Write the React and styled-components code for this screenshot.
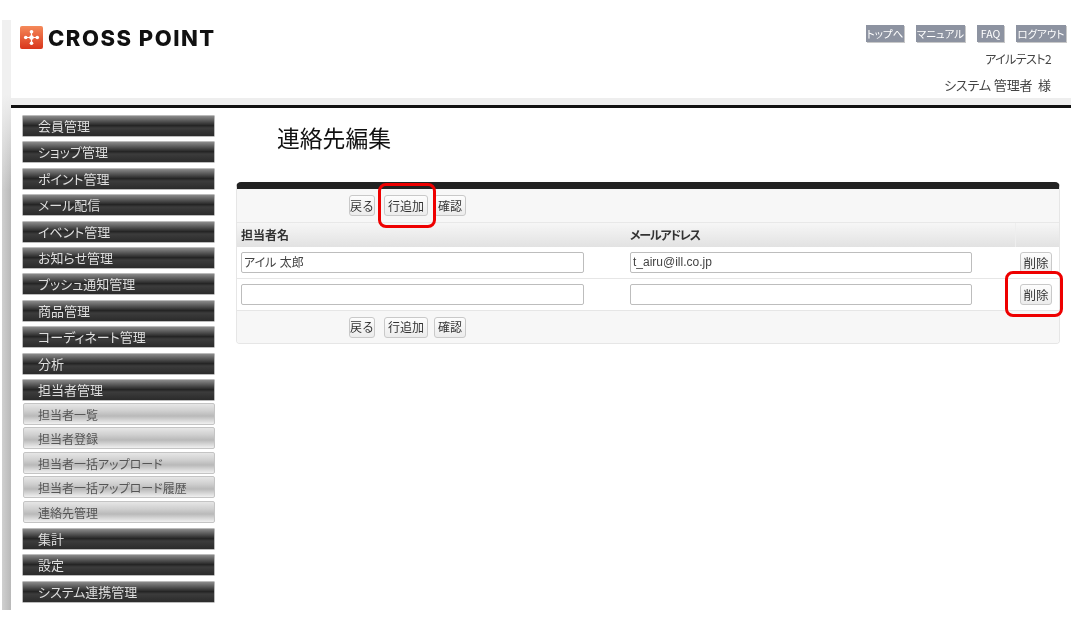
import React from "react";
import styled, { createGlobalStyle } from "styled-components";

const jp = `"Noto Sans CJK JP", "Liberation Sans", sans-serif`;

const Global = createGlobalStyle`
  html, body { margin: 0; padding: 0; background: #fff; }
  body {
    font-family: ${jp};
    font-feature-settings: "palt";
    width: 1071px;
    height: 617px;
    overflow: hidden;
  }
`;

const Page = styled.div`
  position: relative;
  width: 1071px;
  height: 617px;
  padding: 20px 0 7px 2px;
  box-sizing: border-box;
  display: flex;
  filter: blur(0.35px);
`;
const Strip = styled.div`
  width: 9px;
  flex: none;
  background:
    linear-gradient(180deg, #f0f0f0 0, #f0f0f0 75px, rgba(240, 240, 240, 0) 170px),
    linear-gradient(90deg, #d0d0d0, #b9b9b9);
`;
const Main = styled.div`
  flex: 1;
  min-width: 0;
  display: flex;
  flex-direction: column;
`;
const Header = styled.header`
  height: 78px;
  display: flex;
  justify-content: space-between;
  padding-left: 9px;
`;
const Logo = styled.div`
  display: flex;
  align-items: flex-start;
  gap: 5px;
  padding-top: 6px;
  color: #111;
  font-family: Inter, "Liberation Sans", sans-serif;
  font-feature-settings: normal;
  font-weight: 800;
  font-size: 22px;
  line-height: 24px;
  letter-spacing: 1.5px;
  white-space: nowrap;
`;
const HeaderRight = styled.div`
  display: flex;
  flex-direction: column;
  align-items: flex-end;
  padding: 5px 5px 0 0;
`;
const TopNav = styled.nav`
  display: flex;
  gap: 12px;
`;
const TopLink = styled.span`
  height: 17px;
  width: ${(p) => p.$w}px;
  display: flex;
  align-items: center;
  justify-content: center;
  background: #8d93a1;
  color: #fff;
  font-size: 10.5px;
  white-space: nowrap;
  box-shadow: 1px 1px 0 #c8c8c8;
`;
const UserLine = styled.div`
  margin: 8px 15px 0 0;
  font-size: ${(p) => p.$size}px;
  letter-spacing: ${(p) => p.$ls || 0}px;
  line-height: 18px;
  color: #444;
  white-space: pre;
`;
const Rule = styled.div`
  height: 7px;
  background: #eeeeee;
  border-bottom: 3px solid #111;
`;
const Body = styled.div`
  flex: 1;
  display: flex;
  min-height: 0;
`;
const Side = styled.aside`
  width: 193px;
  flex: none;
  margin-left: 11px;
  padding-top: 7px;
  display: flex;
  flex-direction: column;
`;
const MenuItem = styled.div`
  height: 22px;
  flex: none;
  margin-top: ${(p) => p.$mt || 0}px;
  margin-bottom: 4.4px;
  box-sizing: border-box;
  padding-left: 15px;
  border: 1px solid #bbb;
  border-radius: 1px;
  background: linear-gradient(180deg, #8a8a8a 0, #4f4f4f 28%, #242424 48%, #3c3c3c 60%, #2b2b2b 100%);
  color: #dedede;
  font-size: 13px;
  line-height: 20px;
  white-space: nowrap;
`;
const SubItem = styled.div`
  height: 22px;
  flex: none;
  margin: ${(p) => (p.$first ? "-2.4px" : "0")} 0 2.5px 1px;
  box-sizing: border-box;
  padding-left: 14px;
  border: 1px solid #c4c4c4;
  border-radius: 2px;
  background: linear-gradient(180deg, #e6e6e6 0, #cfcfcf 35%, #b9b9b9 60%, #f0f0f0 100%);
  color: #555;
  font-size: 12px;
  line-height: 21px;
  white-space: nowrap;
`;
const Content = styled.main`
  flex: 1;
  min-width: 0;
  padding-left: 21px;
`;
const Title = styled.h1`
  margin: 13px 0 0 41px;
  font-size: 22.8px;
  font-weight: 400;
  font-feature-settings: normal;
  line-height: 34px;
  color: #111;
`;
const Panel = styled.section`
  margin-top: 27px;
  width: 824px;
  height: 162px;
  border: 1px solid #e6e6e6;
  border-top: 7px solid #222;
  border-radius: 5px 5px 4px 4px;
  box-sizing: border-box;
  overflow: hidden;
`;
const Actions = styled.div`
  height: ${(p) => p.$h}px;
  display: flex;
  align-items: center;
  gap: 9px;
  padding-left: 112px;
  background: #f7f7f7;
`;
const Btn = styled.button`
  font-family: ${jp};
  font-feature-settings: normal;
  font-size: ${(p) => p.$size || 12}px;
  color: #333;
  height: 21px;
  width: ${(p) => p.$w}px;
  padding: 0;
  margin-left: ${(p) => p.$ml || 0}px;
  line-height: 18px;
  background: linear-gradient(180deg, #fdfdfd, #ececec);
  border: 1px solid #c9c9c9;
  border-radius: 3px;
  white-space: nowrap;
`;
const Row = styled.div`
  display: grid;
  grid-template-columns: 389px 389px 1fr;
`;
const HeadRow = styled(Row)`
  height: 25px;
  background: linear-gradient(180deg, #f6f6f6, #e2e2e2);
  border-top: 1px solid #e8e8e8;
  box-sizing: border-box;
`;
const HeadCell = styled.div`
  padding-left: 4px;
  font-size: 12px;
  font-weight: 700;
  line-height: 23px;
  letter-spacing: ${(p) => p.$ls || 0}px;
  color: #333;
  border-left: ${(p) => (p.$divider ? "1px solid #eee" : "none")};
`;
const DataRow = styled(Row)`
  height: 32px;
  background: #fff;
  border-bottom: 1px solid #e6e6e6;
  box-sizing: border-box;
  align-items: center;
`;
const Cell = styled.div`
  padding-left: 4px;
  display: flex;
  align-items: center;
`;
const Field = styled.input`
  width: ${(p) => p.$w}px;
  height: 21px;
  box-sizing: border-box;
  border: 1px solid #bdbdbd;
  border-radius: 2px;
  padding: 0 2px 2px;
  font-family: "Liberation Sans", "Noto Sans CJK JP", sans-serif;
  font-feature-settings: "palt";
  font-size: 12px;
  color: #444;
  outline: none;
  background: #fff;
`;
const DelCell = styled.div`
  padding-left: 5px;
  display: flex;
  align-items: center;
`;
const Mark = styled.div`
  position: absolute;
  left: ${(p) => p.$x}px;
  top: ${(p) => p.$y}px;
  width: ${(p) => p.$w}px;
  height: ${(p) => p.$h}px;
  box-sizing: border-box;
  border: 3px solid #ee0000;
  border-radius: 8px;
`;

const LogoIcon = () => (
  <svg width="23" height="23" viewBox="0 0 24 24" style={{ flex: "none" }}>
    <defs>
      <linearGradient id="lg" x1="0" y1="0" x2="0" y2="1">
        <stop offset="0" stopColor="#f58a5a" />
        <stop offset="1" stopColor="#d9361c" />
      </linearGradient>
    </defs>
    <rect width="24" height="24" rx="2" fill="url(#lg)" />
    <path d="M12 5V19M5 12H19" stroke="#fff" strokeWidth="1.3" />
    <circle cx="12" cy="12" r="2.4" fill="#fff" />
    <circle cx="12" cy="6" r="1.9" fill="#fff" />
    <circle cx="12" cy="18" r="1.9" fill="#fff" />
    <circle cx="6" cy="12" r="1.9" fill="#fff" />
    <circle cx="18" cy="12" r="1.9" fill="#fff" />
  </svg>
);

const before = ["会員管理", "ショップ管理", "ポイント管理", "メール配信", "イベント管理", "お知らせ管理", "プッシュ通知管理", "商品管理", "コーディネート管理", "分析", "担当者管理"];
const subs = ["担当者一覧", "担当者登録", "担当者一括アップロード", "担当者一括アップロード履歴", "連絡先管理"];
const after = ["集計", "設定", "システム連携管理"];

const ActionButtons = () => (
  <>
    <Btn $w={26}>戻る</Btn>
    <Btn $w={44}>行追加</Btn>
    <Btn $w={32} $ml={-3}>確認</Btn>
  </>
);

export default function App() {
  return (
    <Page>
      <Global />
      <Strip />
      <Main>
        <Header>
          <Logo>
            <LogoIcon />
            <span>CROSS POINT</span>
          </Logo>
          <HeaderRight>
            <TopNav>
              <TopLink $w={38}>トップへ</TopLink>
              <TopLink $w={49}>マニュアル</TopLink>
              <TopLink $w={27}>FAQ</TopLink>
              <TopLink $w={50}>ログアウト</TopLink>
            </TopNav>
            <UserLine $size={12} $ls={-0.6}>アイルテスト2</UserLine>
            <UserLine $size={13} $ls={-0.1}>{"システム 管理者  様"}</UserLine>
          </HeaderRight>
        </Header>
        <Rule />
        <Body>
          <Side>
            {before.map((t) => <MenuItem key={t}>{t}</MenuItem>)}
            {subs.map((t, i) => <SubItem key={t} $first={i === 0}>{t}</SubItem>)}
            {after.map((t, i) => <MenuItem key={t} $mt={i === 0 ? 2.5 : 0}>{t}</MenuItem>)}
          </Side>
          <Content>
            <Title>連絡先編集</Title>
            <Panel>
              <Actions $h={33}><ActionButtons /></Actions>
              <HeadRow>
                <HeadCell>担当者名</HeadCell>
                <HeadCell $ls={-1.2}>メールアドレス</HeadCell>
                <HeadCell $divider />
              </HeadRow>
              <DataRow>
                <Cell><Field $w={343} defaultValue="アイル 太郎" /></Cell>
                <Cell><Field $w={342} defaultValue="t_airu@ill.co.jp" /></Cell>
                <DelCell><Btn $w={32} $size={12.5}>削除</Btn></DelCell>
              </DataRow>
              <DataRow>
                <Cell><Field $w={343} /></Cell>
                <Cell><Field $w={342} /></Cell>
                <DelCell><Btn $w={32} $size={12.5}>削除</Btn></DelCell>
              </DataRow>
              <Actions $h={32}><ActionButtons /></Actions>
            </Panel>
          </Content>
        </Body>
      </Main>
      <Mark $x={378} $y={183} $w={58} $h={45} />
      <Mark $x={1005} $y={271} $w={58} $h={46} />
    </Page>
  );
}
